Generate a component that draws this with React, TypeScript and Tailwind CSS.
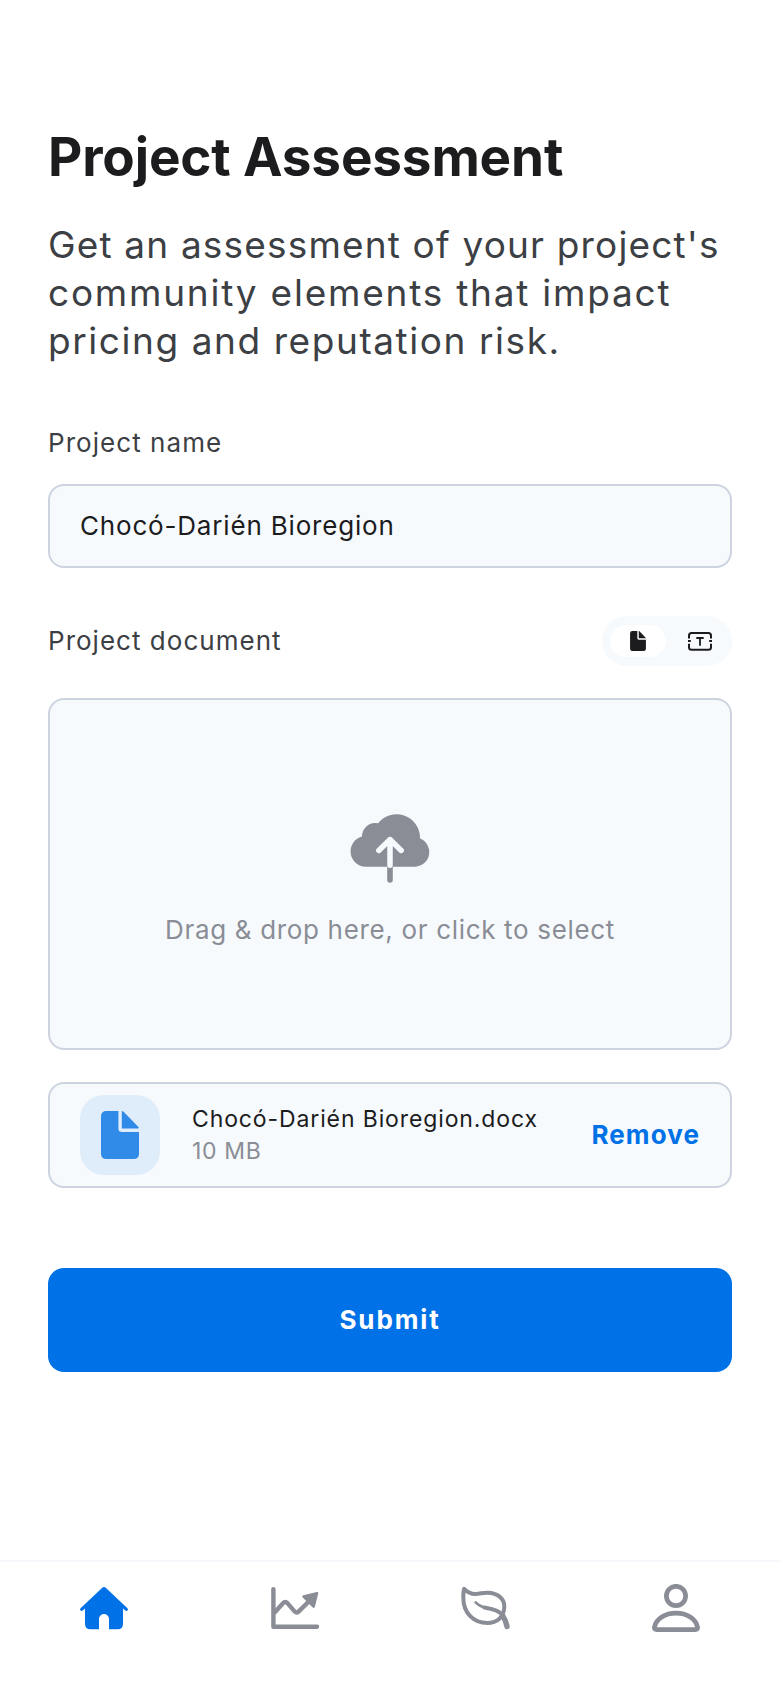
import type { ReactNode } from "react";

function DocumentIcon({ className }: { className: string }) {
  return (
    <svg viewBox="0 0 38 48" className={className} fill="currentColor" aria-hidden="true">
      <path d="M5.5 0H17.4V17.5Q17.4 21 20.9 21H38V42.5Q38 48 32.5 48H5.5Q0 48 0 42.5V5.5Q0 0 5.5 0Z" />
      <path d="M20.8 0Q21.8 0 22.6.8L37.4 16Q38.3 17 37.2 17.4H20.8Z" />
    </svg>
  );
}

function TextBoxIcon() {
  return (
    <svg viewBox="0 0 24 19" className="h-[19px] w-6" fill="none" stroke="currentColor" strokeWidth="2" aria-hidden="true">
      <path d="M1 6.4V3.6Q1 1 3.6 1H20.4Q23 1 23 3.6V6.4M1 11.8V15.2Q1 17.8 3.6 17.8H20.4Q23 17.8 23 15.2V11.8" />
      <path d="M0 9.1H2.8M21.2 9.1H24" />
      <path d="M8.3 6H15.7M12 6V13.7" strokeWidth="1.8" />
    </svg>
  );
}

function CloudUploadIcon() {
  return (
    <svg viewBox="0 0 80 70" className="h-[70px] w-20 overflow-visible" fill="none" strokeLinecap="round" strokeLinejoin="round" aria-hidden="true">
      <path d="M40 50V66" stroke="#8a8d96" strokeWidth="5.6" />
      <path
        d="M15.6 52.7A15.3 15.3 0 0 1 12 22.6A13.3 13.3 0 0 1 28.2 9.3A23.4 23.4 0 0 1 70 23.5V24.5A14.6 14.6 0 0 1 65.2 52.7Z"
        fill="#8a8d96"
      />
      <path d="M40 25.6V51.2M28.8 36.4L40 25.6L51.2 36.4" stroke="#f6fafd" strokeWidth="5.5" />
    </svg>
  );
}

function HomeIcon() {
  return (
    <svg viewBox="0 -2.8 48 48" className="size-12" fill="currentColor" aria-hidden="true">
      <path d="M22 1.1Q24-.7 26 1.1L47.2 21.2Q48.5 22.6 47.5 23.7Q46.4 24.6 45 23.5L43 21.8V37Q43 42.5 37.5 42.5H29V32.3A5 5 0 0 0 19 32.3V42.5H10.5Q5 42.5 5 37V21.8L3 23.5Q1.6 24.6.5 23.7Q-.5 22.6.8 21.2Z" />
    </svg>
  );
}

function ChartIcon() {
  return (
    <svg viewBox="0.4 -2.7 48 48" className="size-12" fill="none" stroke="currentColor" strokeWidth="4.4" strokeLinecap="round" strokeLinejoin="round" aria-hidden="true">
      <path d="M2.8 2.4V40H46.4" />
      <path d="M3.6 26.2L12.6 16.4Q14.7 14.2 16.8 16.4L24.2 24.9Q26 26.8 27.9 24.9L40 13" strokeLinecap="butt" />
      <path d="M46.4 6.6L33 9.9L43 20Z" fill="currentColor" strokeWidth="2.6" />
    </svg>
  );
}

function LeafIcon() {
  return (
    <svg viewBox="-0.3 -2.7 48 48" className="size-12 overflow-visible" fill="none" stroke="currentColor" strokeLinecap="round" strokeLinejoin="round" aria-hidden="true">
      <path
        d="M2.9 2.1C5.6 5 8.5 7.4 14.5 7.2C19 7 22 5.9 26.5 6C36 6.3 43 11.5 43 19.5C43 30.5 35.5 36.3 26 36.3C12.5 36.3 2 26.5 2 11C2 7 2.1 4.2 2.9 2.1Z"
        strokeWidth="4"
      />
      <path d="M14.4 15.6C19.5 21.5 25 20.6 32 22.5C37 23.8 40.2 26 41.8 29" strokeWidth="2.6" />
      <path d="M23 20.8C31 22 38 24 41.4 28.6" strokeWidth="3.8" />
      <path d="M41.4 29C43.4 32 45 36 45.7 39.8" strokeWidth="5.4" />
    </svg>
  );
}

function PersonIcon() {
  return (
    <svg viewBox="0 0 48 48" className="size-12" fill="none" stroke="currentColor" strokeWidth="4.7" strokeLinejoin="round" aria-hidden="true">
      <ellipse cx="24" cy="12" rx="9.6" ry="9.7" />
      <path d="M2.4 43.2C4.2 34.8 13 29.2 24 29.2S43.8 34.8 45.6 43.2Q45.9 45.6 43.4 45.6H4.6Q2.1 45.6 2.4 43.2Z" />
    </svg>
  );
}

function NavItem({ label, active, children }: { label: string; active?: boolean; children: ReactNode }) {
  return (
    <button type="button" aria-label={label} className={active ? "text-[#0071e6]" : "text-[#8a8d96]"}>
      {children}
    </button>
  );
}

export default function App() {
  return (
    <div className="flex min-h-[1688px] w-[780px] flex-col bg-white font-['Inter',sans-serif] text-[#1c1c1e]">
      <main className="flex flex-1 flex-col px-12 pt-[125px]">
        <h1 className="text-[53px] leading-[64px] font-bold tracking-[-0.15px]">Project Assessment</h1>
        <p className="mt-8 text-[37px] leading-[48px] whitespace-nowrap text-[#3c3f44]">
          <span className="block tracking-[1.17px]">Get an assessment of your project's</span>
          <span className="block tracking-[1.77px]">community elements that impact</span>
          <span className="block tracking-[1.57px]">pricing and reputation risk.</span>
        </p>

        <div className="mt-[62px] text-[26px] leading-8 tracking-[1.05px] text-[#3c3f44]">Project name</div>
        <div className="mt-[25px] flex h-[84px] items-center rounded-2xl border-2 border-[#cdd4e0] bg-[#f6fafd] px-[30px] text-[26px] leading-8 tracking-[0.82px]">
          Chocó-Darién Bioregion
        </div>

        <div className="mt-12 flex h-[50px] items-center justify-between">
          <div className="text-[26px] leading-8 tracking-[1.02px] text-[#3c3f44]">Project document</div>
          <div className="flex h-[50px] w-[130px] items-center gap-[6px] rounded-full bg-[#f6fafd] pr-1 pl-2">
            <button type="button" aria-label="File" className="flex h-8 w-14 items-center justify-center rounded-full bg-white">
              <DocumentIcon className="h-5 w-4" />
            </button>
            <button type="button" aria-label="Text" className="flex h-8 w-14 items-center justify-center rounded-full">
              <TextBoxIcon />
            </button>
          </div>
        </div>

        <div className="mt-8 flex h-[352px] flex-col items-center rounded-2xl border-2 border-[#cdd4e0] bg-[#f6fafd] pt-[114px]">
          <CloudUploadIcon />
          <p className="mt-[30px] text-[26px] leading-8 tracking-[0.67px] text-[#8a8d96]">Drag &amp; drop here, or click to select</p>
        </div>

        <div className="mt-8 flex h-[106px] items-center rounded-2xl border-2 border-[#cdd4e0] bg-[#f6fafd] px-[30px]">
          <div className="flex size-20 items-center justify-center rounded-3xl bg-[#dfecfa]">
            <DocumentIcon className="h-12 w-[38px] text-[#2f8ae8]" />
          </div>
          <div className="ml-8 flex-1 text-[23px] leading-8">
            <div className="tracking-[0.88px]">Chocó-Darién Bioregion.docx</div>
            <div className="tracking-[0.65px] text-[#8a8d96]">10 MB</div>
          </div>
          <button type="button" className="text-[26px] leading-8 font-bold tracking-[1.08px] text-[#0071e6]">
            Remove
          </button>
        </div>

        <button type="button" className="mt-20 h-[104px] rounded-2xl bg-[#0071e6] text-[26px] leading-8 font-bold tracking-[1.86px] text-white">
          Submit
        </button>
      </main>

      <nav className="flex h-32 items-start justify-between border-t-2 border-[#f7f7fc] px-20 pt-[22px]">
        <NavItem label="Home" active>
          <HomeIcon />
        </NavItem>
        <NavItem label="Analytics">
          <ChartIcon />
        </NavItem>
        <NavItem label="Nature">
          <LeafIcon />
        </NavItem>
        <NavItem label="Profile">
          <PersonIcon />
        </NavItem>
      </nav>
    </div>
  );
}
